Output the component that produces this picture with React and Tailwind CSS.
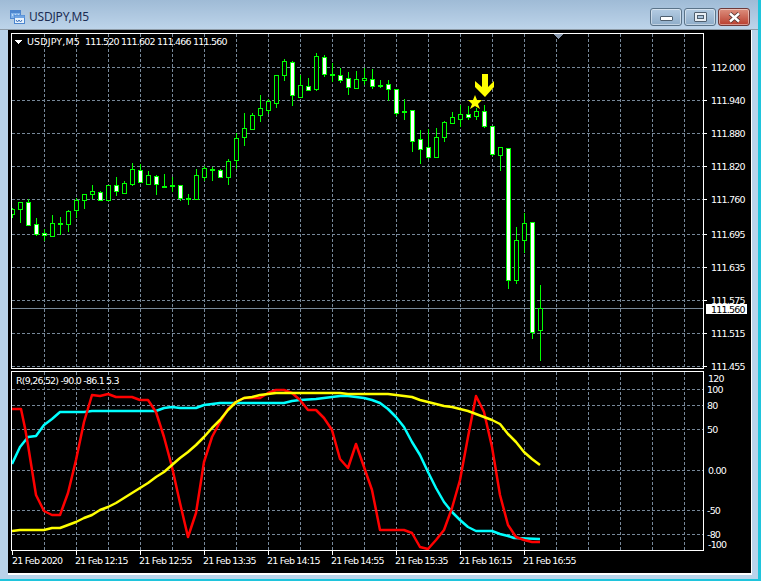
import React from 'react';

const font = '"DejaVu Sans", Verdana, sans-serif';

// [wick high, wick low, body top, body bottom, filled]
const candles = [
  [208, 218, 209, 214, 0], [202, 223, 202, 209, 0], [199, 226, 202, 225, 1], [218, 236, 224, 234, 1],
  [229, 241, 233, 235, 1], [215, 237, 223, 236, 0], [217, 235, 223, 223, 1], [210, 232, 211, 224, 0],
  [198, 218, 200, 210, 0], [194, 209, 194, 200, 0], [185, 199, 191, 194, 0], [191, 201, 192, 200, 1],
  [185, 200, 185, 200, 0], [177, 196, 185, 191, 1], [181, 193, 183, 193, 0], [163, 186, 169, 184, 0],
  [164, 183, 170, 182, 1], [171, 184, 175, 184, 0], [175, 195, 176, 184, 1], [174, 188, 186, 186, 1],
  [177, 192, 185, 185, 1], [185, 201, 185, 198, 1], [194, 205, 198, 198, 1], [169, 199, 175, 199, 0],
  [166, 181, 168, 177, 0], [167, 181, 169, 169, 1], [169, 178, 170, 177, 1], [159, 185, 161, 177, 0],
  [133, 169, 138, 160, 0], [113, 146, 128, 137, 0], [113, 130, 115, 129, 0], [95, 122, 108, 115, 0],
  [99, 114, 101, 110, 0], [75, 108, 75, 103, 0], [59, 81, 61, 75, 0], [61, 106, 62, 95, 1],
  [75, 97, 85, 97, 0], [78, 91, 86, 90, 1], [53, 91, 56, 89, 0], [55, 77, 57, 74, 1],
  [63, 82, 74, 74, 1], [68, 83, 75, 80, 1], [72, 95, 78, 87, 1], [71, 88, 79, 88, 0],
  [68, 85, 78, 80, 0], [69, 89, 79, 86, 1], [80, 88, 85, 85, 1], [80, 101, 84, 89, 1],
  [89, 116, 89, 113, 1], [99, 120, 111, 111, 1], [110, 152, 110, 141, 1], [130, 164, 139, 149, 1],
  [129, 159, 147, 157, 1], [128, 157, 137, 157, 0], [121, 142, 122, 137, 0], [112, 124, 117, 123, 0],
  [105, 127, 114, 119, 0], [106, 120, 114, 117, 1], [108, 120, 111, 116, 0], [105, 128, 111, 126, 1],
  [126, 156, 126, 154, 1], [147, 171, 147, 155, 0], [148, 289, 148, 280, 1], [227, 284, 240, 280, 0],
  [213, 253, 223, 240, 0], [222, 339, 222, 332, 1], [285, 361, 308, 330, 0],
];

const redLine = '12,409 21,409 25,428 28,445 36,495 44,511 52,515 60,515 68,493 76,460 84,422 92,395 100,396 108,394 116,397 132,397 140,400 148,400 156,412 164,437 172,467 180,503 188,537 196,513 204,462 212,437 220,422 228,409 236,402 244,398 252,398 260,398 268,393 276,390 284,390 292,393 300,400 308,410 316,410 324,418 332,430 340,459 348,468 356,444 364,467 372,490 380,530 404,530 412,533 420,547 428,549 436,540 444,530 452,508 460,480 468,437 476,396 484,412 492,447 500,495 508,525 516,537 524,540 532,542 540,542';
const cyanLine = '12,464 20,447 28,437 36,436 44,425 52,419 60,412 84,412 92,411 156,411 164,408 172,407 180,408 196,408 204,405 220,403 284,403 292,401 300,400 316,399 324,398 332,397 340,396 348,396 356,397 364,398 372,400 380,403 388,409 396,417 404,427 412,442 420,455 428,472 436,488 444,502 452,512 460,520 468,527 476,531 492,531 500,534 508,536 514,538 540,539';
const yellowLine = '12,531 20,530 44,530 52,528 60,528 68,525 76,522 84,518 92,515 100,510 108,507 116,503 124,498 132,493 140,488 148,483 156,477 164,472 172,465 180,458 188,452 196,445 204,437 212,428 220,420 228,410 236,402 244,398 252,397 260,395 268,394 276,393 340,393 348,394 388,394 396,395 412,397 420,400 428,402 436,404 444,406 452,407 460,409 468,411 476,414 484,417 492,420 500,424 508,434 516,442 524,452 532,459 540,465';

const priceLabels = [
  ['112.000', 67], ['111.940', 100], ['111.880', 133], ['111.820', 166], ['111.760', 199], ['111.695', 234],
  ['111.635', 267], ['111.575', 300], ['111.515', 333], ['111.455', 366],
];
const oscLabels = [
  ['120', 378, 708, false], ['100', 389, 707, true], ['80', 405, 707, true], ['50', 429, 707, true],
  ['0.00', 470, 708, true], ['-50', 510, 707, true], ['-80', 534, 707, true], ['-100', 544, 708, false],
];
const timeLabels = [
  ['21 Feb 2020', 12], ['21 Feb 12:15', 75], ['21 Feb 12:55', 139], ['21 Feb 13:35', 203], ['21 Feb 14:15', 267],
  ['21 Feb 14:55', 331], ['21 Feb 15:35', 395], ['21 Feb 16:15', 459], ['21 Feb 16:55', 523],
];
const header = [['111.520', 85], ['111.602', 121], ['111.466', 157], ['111.560', 193]];
const gridX = Array.from({ length: 21 }, (_, i) => 44 + i * 32);
const ticksX = [12, 76, 140, 204, 268, 332, 396, 460, 524];
const grid = '#778899';

function Label({ x, y, children, fill = 'white', width }) {
  return (
    <text x={x} y={y} fill={fill} fontSize="9.5" textLength={width} className="tracking-[-0.8px]" style={{ fontFamily: font }}>
      {children}
    </text>
  );
}

function Chart() {
  return (
    <svg width="743" height="543" viewBox="8 30 743 543" className="block bg-black">
      <defs>
        <clipPath id="mainClip"><rect x="12" y="34" width="692" height="335" /></clipPath>
        <clipPath id="oscClip"><rect x="12" y="372" width="692" height="179" /></clipPath>
      </defs>

      {/* grid */}
      <g shapeRendering="crispEdges" stroke={grid} strokeDasharray="3 2" strokeWidth="1">
        {gridX.map((x) => (
          <g key={x}>
            <line x1={x + 0.5} x2={x + 0.5} y1="34" y2="369" />
            <line x1={x + 0.5} x2={x + 0.5} y1="372" y2="551" />
          </g>
        ))}
        {priceLabels.map(([t, y]) => <line key={t} x1="12" x2="704" y1={y + 0.5} y2={y + 0.5} />)}
        {oscLabels.filter((l) => l[3]).map(([t, y]) => <line key={t} x1="12" x2="704" y1={y + 0.5} y2={y + 0.5} />)}
      </g>
      <rect x="12" y="308" width="692" height="1" fill={grid} shapeRendering="crispEdges" />

      {/* candles */}
      <g clipPath="url(#mainClip)" shapeRendering="crispEdges">
        {candles.map(([hi, lo, top, bot, filled], i) => {
          const x = 12 + i * 8;
          const flat = top === bot;
          return (
            <g key={i}>
              <rect x={x} y={hi} width="1" height={lo - hi} fill="#00ff00" />
              <rect x={x - 2} y={top} width="5" height={flat ? 2 : bot - top + 1} fill="#00ff00" />
              {!flat && <rect x={x - 1} y={top + 1} width="3" height={bot - top - 1} fill={filled ? '#ffffff' : '#000000'} />}
            </g>
          );
        })}
      </g>

      {/* star + arrow */}
      <polygon points="475,95 477,100 482,100 478,104 480,109 475,106 470,109 472,104 468,100 473,100" fill="#ffff00" />
      <polygon points="482,74 488,74 488,87 494,81 494,87 485,97 475,87 475,81 482,87" fill="#ffff00" />

      {/* oscillator */}
      <g clipPath="url(#oscClip)" fill="none" strokeWidth="2.5" strokeLinejoin="round">
        <polyline points={cyanLine} stroke="#00ffff" />
        <polyline points={redLine} stroke="#ff0000" />
        <polyline points={yellowLine} stroke="#ffff00" />
      </g>

      {/* frames */}
      <g shapeRendering="crispEdges" fill="none" stroke="white" strokeWidth="1">
        <rect x="11.5" y="33.5" width="692" height="335" />
        <rect x="11.5" y="371.5" width="692" height="179" />
        {priceLabels.map(([t, y]) => <line key={t} x1="704" x2="707" y1={y + 0.5} y2={y + 0.5} />)}
        {ticksX.map((x) => <line key={x} x1={x + 0.5} x2={x + 0.5} y1="551" y2="555" />)}
      </g>
      <polygon points="553,34 563,34 558,39" fill="#8a9ab0" shapeRendering="crispEdges" />
      <polygon points="15,40 22,40 18.5,44" fill="white" shapeRendering="crispEdges" />

      {/* text */}
      <Label x={27} y={45} width={52}>USDJPY,M5</Label>
      {header.map(([t, x]) => <Label key={t} x={x} y={45}>{t}</Label>)}
      <Label x={16} y={384}>R(9,26,52) -90.0 -86.1 5.3</Label>
      {priceLabels.map(([t, y]) => <Label key={t} x={711} y={y + 4}>{t}</Label>)}
      <rect x="706" y="304" width="41" height="10" fill="white" shapeRendering="crispEdges" />
      <Label x={711} y={313} fill="#000000">111.560</Label>
      {oscLabels.map(([t, y, x]) => <Label key={t} x={x} y={y + 4}>{t}</Label>)}
      {timeLabels.map(([t, x]) => <Label key={t} x={x} y={564}>{t}</Label>)}
    </svg>
  );
}

function TitleIcon() {
  return (
    <svg width="15" height="14" viewBox="0 0 15 14" className="block">
      <rect x="0.5" y="0.5" width="10" height="8" fill="#7fb2ea" stroke="#4c86cf" />
      <rect x="0.5" y="0.5" width="10" height="2.5" fill="#4c86cf" />
      <path d="M2 5h1M5 5h1M8 5h1" stroke="white" />
      <rect x="4.5" y="5.5" width="10" height="8" fill="#e8f2fc" stroke="#4c86cf" />
      <rect x="4.5" y="5.5" width="10" height="2.5" fill="#6ea4e4" />
      <path d="M6 10l1.5 2 1.5-2 1.5 2 1.5-2" fill="none" stroke="#3a70bb" />
    </svg>
  );
}

function WinButton({ className, children }) {
  return (
    <div className={`flex h-[18px] items-center justify-center rounded-[3px] border border-[#5a7389] shadow-[inset_0_0_0_1px_rgba(255,255,255,0.45)] ${className}`}>
      {children}
    </div>
  );
}

export default function App() {
  return (
    <div className="flex h-[581px] w-[761px] flex-col overflow-hidden border-b-2 border-r-[3px] border-[#1fc4dc] bg-[#b9d3ea]">
      {/* Title bar */}
      <div className="flex h-[30px] shrink-0 bg-gradient-to-b from-[#9fbbd6] to-[#bdd4ea] border-b border-[#8d9aa6] pl-[10px] pr-[8px]">
        <div className="mt-[10px]"><TitleIcon /></div>
        <span className="ml-[4px] mt-[9px] text-[12px] leading-[16px] tracking-[-0.2px] text-[#1c2c52]" style={{ fontFamily: '"Noto Sans", sans-serif' }}>USDJPY,M5</span>
        <div className="ml-auto mt-[8px] flex gap-[2px]">
          <WinButton className="w-[32px] bg-gradient-to-b from-[#b4cce3] to-[#8fadc9]">
            <div className="mt-[3px] h-[5px] w-[13px] rounded-[1px] border border-[#4f5f6f] bg-white" />
          </WinButton>
          <WinButton className="w-[32px] bg-gradient-to-b from-[#b4cce3] to-[#8fadc9]">
            <div className="flex h-[10px] w-[13px] items-center justify-center rounded-[1px] border border-[#4f5f6f] bg-[#e8eef4]">
              <div className="h-[4px] w-[7px] border border-[#4f5f6f] bg-[#a9c2da]" />
            </div>
          </WinButton>
          <WinButton className="w-[32px] border-[#6e3a3a] bg-gradient-to-b from-[#dc8f7e] to-[#b83c2e]">
            <svg width="15" height="11" viewBox="0 0 15 11">
              <path d="M3 1.5l9 8M12 1.5l-9 8" stroke="#4a3030" strokeWidth="4" />
              <path d="M3 1.5l9 8M12 1.5l-9 8" stroke="white" strokeWidth="2.4" />
            </svg>
          </WinButton>
        </div>
      </div>

      {/* Chart */}
      <div className="flex-1 pl-[8px] pr-[6px] pb-[5px]">
        <div className="border-b-2 border-r border-white">
          <Chart />
        </div>
      </div>
    </div>
  );
}
